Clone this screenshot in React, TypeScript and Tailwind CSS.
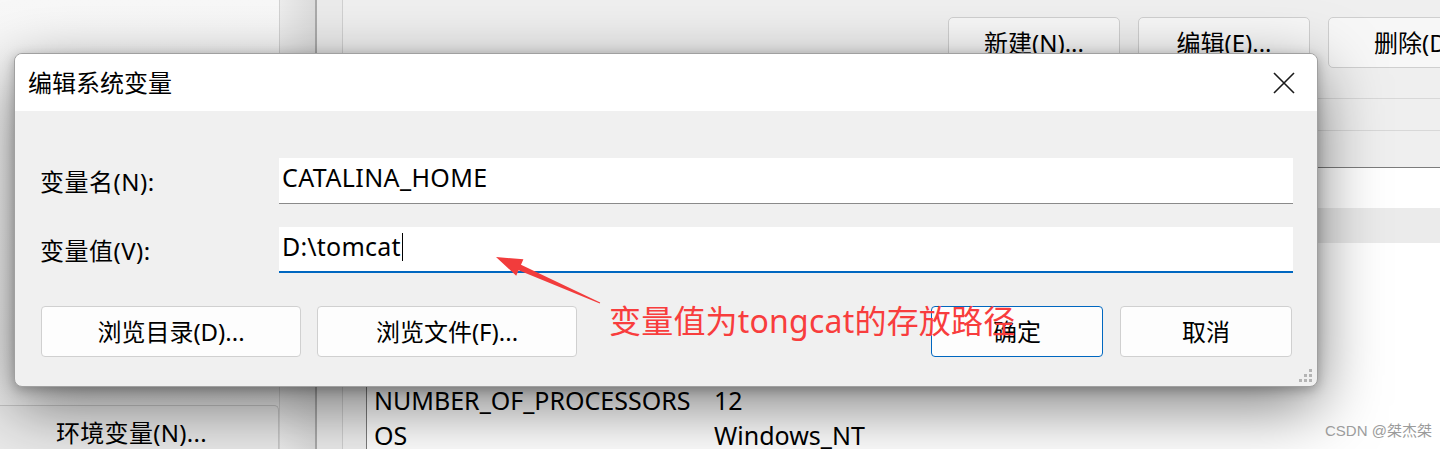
import React from "react";

function BgButton({ children }: { children: React.ReactNode }) {
  return (
    <div className="w-[172px] h-[51px] shrink-0 bg-[#f7f7f7] border border-[#cfcfcf] rounded-[5px] flex items-center justify-center">
      {children}
    </div>
  );
}

function DlgButton({ children, w, primary }: { children: React.ReactNode; w: string; primary?: boolean }) {
  return (
    <div
      className={`${w} h-[51px] shrink-0 bg-[#fdfdfd] border rounded-[4px] flex items-center justify-center ${
        primary ? "border-[#0067c0]" : "border-[#d0d0d0]"
      }`}
    >
      {children}
    </div>
  );
}

export default function App() {
  return (
    <div className="relative w-[1440px] h-[449px] overflow-hidden bg-[#efefef] flex text-[24px] text-[#000] font-['Noto_Sans','Noto_Sans_CJK_SC',sans-serif]">
      {/* background window: left panel */}
      <div className="w-[280px] shrink-0 h-full flex flex-col border-r border-[#d2d2d2] bg-gradient-to-b from-[#f8f8f8] to-[#ececec]">
        <div className="h-[405px] shrink-0" />
        <div className="h-[54px] w-[279px] shrink-0 bg-[#eaeaea] border-t border-r border-[#c8c8c8] rounded-tr-[5px] pl-[56px] flex items-center tracking-[0.3px]">
          环境变量(N)...
        </div>
      </div>
      {/* middle strip */}
      <div className="w-[35px] shrink-0 h-full bg-gradient-to-r from-[#ececec] to-[#dcdcdc]" />
      <div className="w-[28px] shrink-0 h-full border-l-2 border-[#aaaaaa] border-r border-r-[#d0d0d0] bg-[#ebebeb]" />
      {/* right panel */}
      <div className="flex-1 h-full flex flex-col min-w-0">
        <div className="h-[99px] shrink-0 border-b border-[#d8d8d8] pt-[17px] pl-[605px] flex gap-[18px]">
          <BgButton>新建(N)...</BgButton>
          <BgButton>编辑(E)...</BgButton>
          <BgButton>删除(D)</BgButton>
        </div>
        <div className="h-[32px] shrink-0 border-b border-[#d8d8d8]" />
        <div className="h-[36px] shrink-0" />
        <div className="flex-1 ml-[23px] border-l border-t border-[#7c7c7c] bg-white flex flex-col text-[25px]">
          <div className="h-[40px] shrink-0" />
          <div className="h-[35px] shrink-0 bg-[#ebebeb]" />
          <div className="h-[35px] shrink-0" />
          <div className="h-[35px] shrink-0" />
          <div className="h-[35px] shrink-0" />
          <div className="h-[35px] shrink-0" />
          <div className="h-[35px] shrink-0 flex items-center">
            <span className="w-[347px] pl-[7px] shrink-0">NUMBER_OF_PROCESSORS</span>
            <span>12</span>
          </div>
          <div className="h-[35px] shrink-0 flex items-center">
            <span className="w-[347px] pl-[7px] shrink-0">OS</span>
            <span>Windows_NT</span>
          </div>
        </div>
      </div>

      {/* dialog window */}
      <div className="absolute left-[14px] top-[53px] w-[1304px] h-[334px] rounded-[8px] border border-[#a0a0a0] overflow-hidden flex flex-col bg-[#f0f0f0] shadow-[0_20px_64px_rgba(0,0,0,0.5),0_3px_12px_rgba(0,0,0,0.25)]">
        <div className="h-[57px] shrink-0 bg-white flex items-center justify-between pl-[13px] pr-[22px]">
          <span className="pt-[1px]">编辑系统变量</span>
          <svg width="22" height="22" viewBox="0 0 22 22" className="mt-[1px]">
            <path d="M1 1 L21 21 M21 1 L1 21" stroke="#1a1a1a" strokeWidth="1.6" fill="none" />
          </svg>
        </div>
        <div className="relative flex-1 flex flex-col pl-[25px] pr-[24px] pt-[47px]">
          <div className="flex items-center h-[46px]">
            <span className="w-[239px] shrink-0 pt-[2px] tracking-[0.5px]">变量名(N):</span>
            <div className="flex-1 h-[46px] bg-white border-b border-[#8a8a8a] pl-[3px] pb-[5px] flex items-center text-[25px] tracking-[0.4px]">
              CATALINA_HOME
            </div>
          </div>
          <div className="flex items-center h-[46px] mt-[23px]">
            <span className="w-[239px] shrink-0 pt-[2px] tracking-[0.5px]">变量值(V):</span>
            <div className="flex-1 h-[46px] bg-white border-b-2 border-[#0067c0] pl-[3px] pb-[4px] flex items-center text-[25px] tracking-[0.2px]">
              <span>D:\tomcat</span>
              <span className="w-[1px] h-[28px] bg-black ml-[1px]" />
            </div>
          </div>
          <div className="flex justify-between mt-[33px] pl-[1px] pr-[1px]">
            <div className="flex gap-[16px]">
              <DlgButton w="w-[260px]">浏览目录(D)...</DlgButton>
              <DlgButton w="w-[260px]">浏览文件(F)...</DlgButton>
            </div>
            <div className="flex gap-[17px]">
              <DlgButton w="w-[172px]" primary>
                确定
              </DlgButton>
              <DlgButton w="w-[172px]">取消</DlgButton>
            </div>
          </div>
          {/* resize grip */}
          <svg className="absolute right-[4px] bottom-[3px]" width="16" height="16" viewBox="0 0 16 16">
            <g fill="#b4b4b4">
              <rect x="12" y="2" width="3" height="3" />
              <rect x="7" y="7" width="3" height="3" />
              <rect x="12" y="7" width="3" height="3" />
              <rect x="2" y="12" width="3" height="3" />
              <rect x="7" y="12" width="3" height="3" />
              <rect x="12" y="12" width="3" height="3" />
            </g>
          </svg>
        </div>
      </div>

      {/* annotation arrow */}
      <svg className="absolute left-0 top-0 pointer-events-none" width="1440" height="449">
        <polygon
          points="496,257 523.4,259.3 521,264.8 600.2,302.5 599.8,303.5 518.6,270.2 516.2,275.7"
          fill="#f23c3c"
        />
      </svg>
      <div className="absolute left-[609px] top-[300px] text-[32px] leading-[42px] tracking-[0.2px] text-[#f83d3d] font-['Noto_Sans','Noto_Sans_CJK_SC',sans-serif] pointer-events-none">
        变量值为tongcat的存放路径
      </div>

      {/* watermark */}
      <div className="absolute left-[1325px] top-[421px] text-[15px] leading-[20px] text-[#9c9c9c] font-['Liberation_Sans','Noto_Sans_CJK_SC',sans-serif]">
        CSDN @桀杰桀
      </div>
    </div>
  );
}
